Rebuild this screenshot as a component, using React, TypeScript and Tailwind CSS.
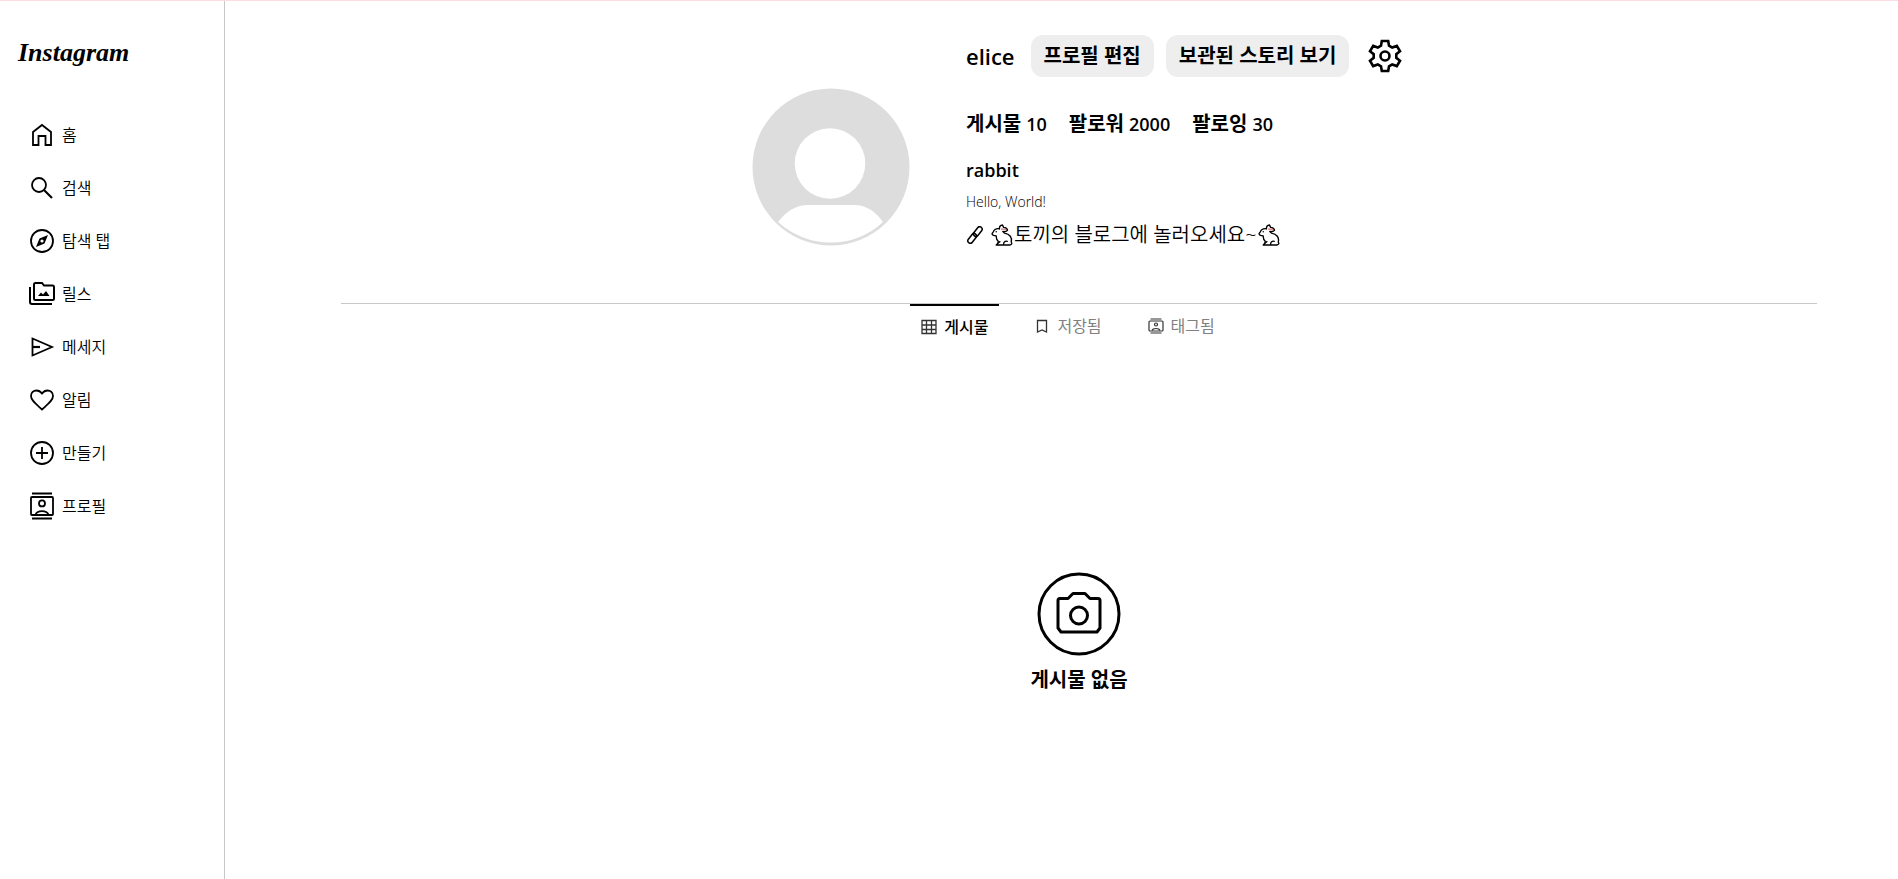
import type { ReactNode } from "react";

type IconProps = { className?: string; children: ReactNode; viewBox?: string };

function Icon({ className = "size-7", children, viewBox = "0 0 28 28" }: IconProps) {
  return (
    <svg
      viewBox={viewBox}
      className={className}
      fill="none"
      stroke="currentColor"
      strokeWidth={1.8}
      aria-hidden="true"
    >
      {children}
    </svg>
  );
}

function Rabbit() {
  return (
    <Icon className="size-[22px] shrink-0" viewBox="0 0 21 21">
      <g strokeWidth={1.3} strokeLinejoin="round" strokeLinecap="round">
        <path d="M8 4.5C5 4 3 5.5 2.2 7.500L1 9.200C1.200 10.800 3 11.300 5 11.300C5.200 13 4.600 14.500 6.800 16.200V18.200L5 20H18C20 19.700 20.300 18.300 19.300 17.300C20.500 13 18 9.500 12.800 8.700L11.500 7.200" />
        <path d="M8 4.500C8 2.500 9 1.200 11 1L12 3.200C14 3.300 15.500 4.300 15.800 6C14.500 7.200 13 7.500 11.500 7.200" />
        <path d="M12 19.500C12 17 13.500 16 15.500 16.500M6.800 18L8.500 16.800" />
      </g>
      <path d="M9.5 4.800L14.500 5.500" stroke="#e58b8b" strokeWidth={1.6} />
      <circle cx="5" cy="7.500" r=".7" fill="currentColor" stroke="none" />
    </Icon>
  );
}

const menu = [
  {
    label: "홈",
    icon: (
      <Icon>
        <path d="M5 11L14 4L23 11V24H17.5V15H10.5V24H5Z" />
      </Icon>
    ),
  },
  {
    label: "검색",
    icon: (
      <Icon>
        <circle cx="11" cy="11" r="7" />
        <path d="M16 16L24 24" strokeWidth={2.2} />
      </Icon>
    ),
  },
  {
    label: "탐색 탭",
    icon: (
      <Icon>
        <circle cx="14" cy="14" r="11" />
        <path
          d="M8 20L11.5 11.5L20 8L16.5 16.5ZM14 12.4A1.6 1.6 0 1 0 14 15.6A1.6 1.6 0 1 0 14 12.4Z"
          fill="currentColor"
          fillRule="evenodd"
          stroke="none"
        />
      </Icon>
    ),
  },
  {
    label: "릴스",
    icon: (
      <Icon>
        <path
          d="M6 4.5Q6 3 7.5 3H14L16 5.5H24.5Q26 5.5 26 7V18.5Q26 20 24.5 20H7.5Q6 20 6 18.5Z"
          strokeWidth={2}
        />
        <path d="M2 7V22Q2 24 4 24H24" strokeWidth={2} />
        <path d="M10 16L13 12.5L15 14.5L18 11L21.5 16Z" fill="currentColor" stroke="none" />
      </Icon>
    ),
  },
  {
    label: "메세지",
    icon: (
      <Icon>
        <path d="M4.5 5.5L24 14L4.5 22.5Z" />
        <path d="M4.5 14H12" strokeWidth={2.2} />
      </Icon>
    ),
  },
  {
    label: "알림",
    icon: (
      <Icon>
        <path d="M14 23.5C8 18 3 14.5 3 10C3 6.5 5.5 4.5 8.5 4.5C11 4.5 12.5 5.5 14 7.5C15.5 5.5 17 4.5 19.5 4.5C22.5 4.5 25 6.5 25 10C25 14.5 20 18 14 23.5Z" />
      </Icon>
    ),
  },
  {
    label: "만들기",
    icon: (
      <Icon>
        <circle cx="14" cy="14" r="11" />
        <path d="M14 8V20M8 14H20" />
      </Icon>
    ),
  },
  {
    label: "프로필",
    icon: (
      <Icon>
        <path d="M4 1.5H24M4 26.5H24" strokeWidth={2} />
        <rect x="3" y="5" width="22" height="18" rx="1" />
        <circle cx="14" cy="11.4" r="3" />
        <path d="M7.5 22.5C9.5 18 18.5 18 20.5 22.5" />
      </Icon>
    ),
  },
];

function Sidebar() {
  return (
    <aside className="w-[225px] shrink-0 border-r border-[#c8c8c8]">
      <a
        href="#"
        className="ml-[18px] mt-7 block h-12 font-['Liberation_Serif',serif] text-[26px] font-bold italic leading-[48px]"
      >
        Instagram
      </a>
      <nav className="mt-[31px]">
        <ul>
          {menu.map(({ label, icon }) => (
            <li key={label}>
              <a href="#" className="ml-7 flex h-[53px] items-center gap-[6px] text-base font-[350]">
                {icon}
                {label}
              </a>
            </li>
          ))}
        </ul>
      </nav>
    </aside>
  );
}

function Avatar() {
  return (
    <svg viewBox="0 0 158 158" className="mt-[53px] size-[158px] shrink-0" role="img" aria-label="elice">
      <circle cx="79" cy="79" r="78.5" fill="#ddd" />
      <circle cx="78" cy="75.5" r="35.3" fill="#fff" />
      <path d="M26 134Q39 117 56 117H102Q119 117 131 134Q109 154.5 79 154.5Q49 154.5 26 134Z" fill="#fff" />
    </svg>
  );
}

const stats = [
  ["게시물", "10"],
  ["팔로워", "2000"],
  ["팔로잉", "30"],
];

function ProfileHeader() {
  return (
    <section className="mt-[34px] flex gap-14 pl-[527px]">
      <Avatar />
      <div>
        <div className="flex h-[42px] items-center font-semibold">
          <h1 className="mr-4 text-[22px]">elice</h1>
          <button type="button" className="mr-3 h-[42px] rounded-xl bg-[#eee] px-[13px] text-[20px]">
            프로필 편집
          </button>
          <button type="button" className="mr-[18px] h-[42px] rounded-xl bg-[#eee] px-[13px] text-[20px]">
            보관된 스토리 보기
          </button>
          <button type="button" aria-label="설정">
            <Icon className="size-9" viewBox="0 0 36 36">
              <path
                strokeWidth={2.6}
                d="M14.8 3H21.2L22 7.6L25.2 9.5L29.8 7.9L33 13.3L29.3 16.2V19.8L33 22.7L29.8 28.1L25.2 26.5L22 28.4L21.2 33H14.8L14 28.4L10.8 26.5L6.2 28.1L3 22.7L6.7 19.8V16.2L3 13.3L6.2 7.9L10.8 9.5L14 7.6Z"
              />
              <circle cx="18" cy="18" r="4.5" strokeWidth={2.6} />
            </Icon>
          </button>
        </div>
        <dl className="mt-[33px] flex h-7 items-center gap-[22px] font-semibold">
          {stats.map(([name, count]) => (
            <div key={name} className="flex items-center gap-[5px]">
              <dt className="text-[20px]">{name}</dt>
              <dd className="text-lg">{count}</dd>
            </div>
          ))}
        </dl>
        <h2 className="mt-[18px] text-lg font-semibold leading-7">rabbit</h2>
        <p className="mt-2 text-sm font-[350]">Hello, World!</p>
        <a href="#" className="mt-[9px] flex h-7 items-center text-[20px] font-[350]">
          <Icon className="mr-[7px] size-[18px]" viewBox="0 0 18 18">
            <g strokeWidth={1.5}>
              <rect x="-2.5" y="-5.5" width="5" height="11" rx="2.5" transform="translate(11.8 5.6) rotate(38)" />
              <rect x="-2.5" y="-5.5" width="5" height="11" rx="2.5" transform="translate(6.2 12.4) rotate(38)" />
            </g>
          </Icon>
          <Rabbit />
          <span className="mx-px">토끼의 블로그에 놀러오세요~</span>
          <Rabbit />
        </a>
      </div>
    </section>
  );
}

function Tabs() {
  return (
    <nav className="ml-[116px] mr-[81px] mt-[54px] flex justify-center gap-6 border-t border-[#c8c8c8] pr-[22px] text-base text-[#808080]">
      <a
        href="#"
        className="flex h-11 items-center gap-[7px] border-t-2 border-black px-[11px] font-medium text-black"
      >
        <Icon className="size-4" viewBox="0 0 16 16">
          <path
            d="M1 1.5H15V14.5H1ZM1 6H15M1 10.5H15M5.5 1.5V14.5M10.5 1.5V14.5"
            stroke="#333"
            strokeWidth={1.3}
          />
        </Icon>
        게시물
      </a>
      <a href="#" className="flex h-11 items-center gap-[7px] px-[11px]">
        <Icon className="size-4 text-[#333]" viewBox="0 0 16 16">
          <path d="M3.5 2.5H12.5V14L8 12L3.5 14Z" strokeWidth={1.3} />
        </Icon>
        저장됨
      </a>
      <a href="#" className="flex h-11 items-center gap-[7px] px-[11px]">
        <Icon className="size-4 text-[#333]" viewBox="0 0 16 16">
          <g strokeWidth={1.2}>
            <path d="M2.5 1H13.5M2.5 15H13.5" />
            <rect x="1" y="3" width="14" height="10" rx="1" />
            <circle cx="8" cy="6.5" r="1.5" />
            <path d="M4 12.5C5 9.8 11 9.8 12 12.5" />
          </g>
        </Icon>
        태그됨
      </a>
    </nav>
  );
}

function EmptyPosts() {
  return (
    <section className="ml-[116px] mr-[81px] mt-[224px] flex flex-col items-center">
      <Icon className="size-[84px]" viewBox="0 0 84 84">
        <circle cx="42" cy="42" r="40" strokeWidth={3} />
        <path
          strokeWidth={3}
          strokeLinejoin="round"
          d="M23 26.5H31L36 21.5H48L53 26.5H61Q63 26.5 63 28.5V56L60 60H24L21 56V28.5Q21 26.5 23 26.5Z"
        />
        <circle cx="42" cy="43.5" r="8.5" strokeWidth={3} />
      </Icon>
      <h2 className="mt-2 text-[20px] font-semibold leading-8">게시물 없음</h2>
    </section>
  );
}

export default function App() {
  return (
    <div className="flex min-h-screen flex-col border-t border-[#ffdce2] bg-white font-['Open_Sans','Noto_Sans_CJK_KR',sans-serif] text-black">
      <div className="flex grow">
        <Sidebar />
        <main className="min-w-0 grow">
          <ProfileHeader />
          <Tabs />
          <EmptyPosts />
        </main>
      </div>
    </div>
  );
}
